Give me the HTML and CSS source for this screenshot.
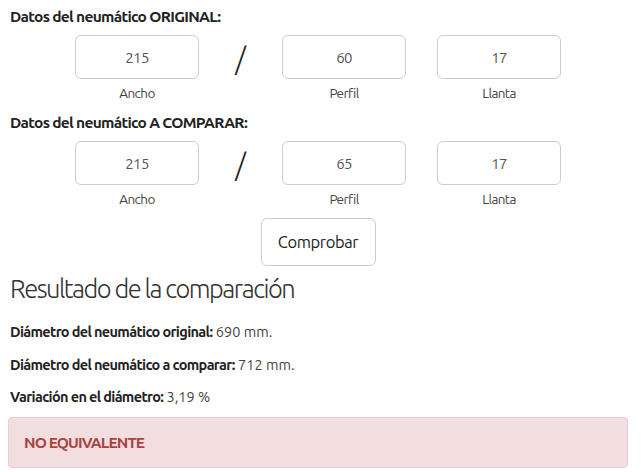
FILE: index.html
```html
<!DOCTYPE html>
<html lang="es">
<head>
    <meta charset="UTF-8">
    <meta name="viewport" content="width=device-width, initial-scale=1.0">
    <title>Comparador de neumáticos</title>
    <link rel="stylesheet" href="styles.css">
</head>
<body>
    <div class="page">
        <h4 class="section-title">Datos del neumático ORIGINAL:</h4>
        <div class="tire-row">
            <div class="field">
                <input class="tire-input" type="text" value="215">
                <span class="field-label">Ancho</span>
            </div>
            <div class="slash">/</div>
            <div class="field">
                <input class="tire-input" type="text" value="60">
                <span class="field-label">Perfil</span>
            </div>
            <div class="field">
                <input class="tire-input" type="text" value="17">
                <span class="field-label">Llanta</span>
            </div>
        </div>

        <h4 class="section-title">Datos del neumático A COMPARAR:</h4>
        <div class="tire-row">
            <div class="field">
                <input class="tire-input" type="text" value="215">
                <span class="field-label">Ancho</span>
            </div>
            <div class="slash">/</div>
            <div class="field">
                <input class="tire-input" type="text" value="65">
                <span class="field-label">Perfil</span>
            </div>
            <div class="field">
                <input class="tire-input" type="text" value="17">
                <span class="field-label">Llanta</span>
            </div>
        </div>

        <div class="actions">
            <button class="btn" type="button">Comprobar</button>
        </div>

        <h3 class="result-title">Resultado de la comparación</h3>
        <p class="result-line"><b>Diámetro del neumático original:</b> 690 mm.</p>
        <p class="result-line"><b>Diámetro del neumático a comparar:</b> 712 mm.</p>
        <p class="result-line"><b>Variación en el diámetro:</b> 3,19 %</p>

        <div class="alert alert-danger"><b>NO EQUIVALENTE</b></div>
    </div>
</body>
</html>
```

FILE: styles.css
```css
body {
    margin: 0;
    background: #fff;
    color: #333;
    font-family: "Ubuntu", "Roboto", sans-serif;
    font-size: 14px;
}
.page {
    width: 620px;
    padding: 0 8px;
}
.section-title {
    margin: 6px 0 7px 2px;
    font-size: 15.5px;
    line-height: 22px;
    font-weight: bold;
    color: #222;
    letter-spacing: -0.7px;
}
.tire-row {
    display: grid;
    grid-template-columns: 124px 21px 124px 124px;
    column-gap: 31px;
    justify-content: center;
    margin-bottom: 10px;
}
.field {
    display: flex;
    flex-direction: column;
    align-items: center;
}
.tire-input {
    box-sizing: border-box;
    width: 124px;
    height: 44px;
    border: 1px solid #ccc;
    border-radius: 6px;
    text-align: center;
    font-family: inherit;
    font-size: 15px;
    letter-spacing: -0.7px;
    color: #555;
}
.field-label {
    margin-top: 5px;
    font-size: 13.5px;
    line-height: 18px;
    letter-spacing: -0.6px;
    color: #444;
}
.slash {
    align-self: start;
    height: 44px;
    line-height: 46px;
    text-align: center;
    font-size: 30px;
    font-weight: 300;
    color: #222;
}
.actions {
    display: flex;
    justify-content: center;
    margin-top: 1px;
}
.btn {
    width: 115px;
    height: 48px;
    background: #fff;
    border: 1px solid #ccc;
    border-radius: 6px;
    font-family: inherit;
    font-size: 16.5px;
    letter-spacing: -0.4px;
    color: #222;
}
.result-title {
    margin: 7px 0 17px 2px;
    font-size: 25.5px;
    line-height: 32px;
    font-weight: 300;
    color: #333;
    letter-spacing: -1.5px;
}
.result-line {
    margin: 12.5px 0 0 2px;
    font-size: 14.5px;
    line-height: 20px;
    color: #444;
}
.result-line b {
    color: #222;
    letter-spacing: -0.65px;
}
.alert {
    margin-top: 10px;
    padding: 14px 15px;
    line-height: 21px;
    border: 1px solid #ebccd1;
    border-radius: 4px;
    background: #f2dede;
    color: #a94442;
    font-size: 15.5px;
    letter-spacing: -0.9px;
}
```
